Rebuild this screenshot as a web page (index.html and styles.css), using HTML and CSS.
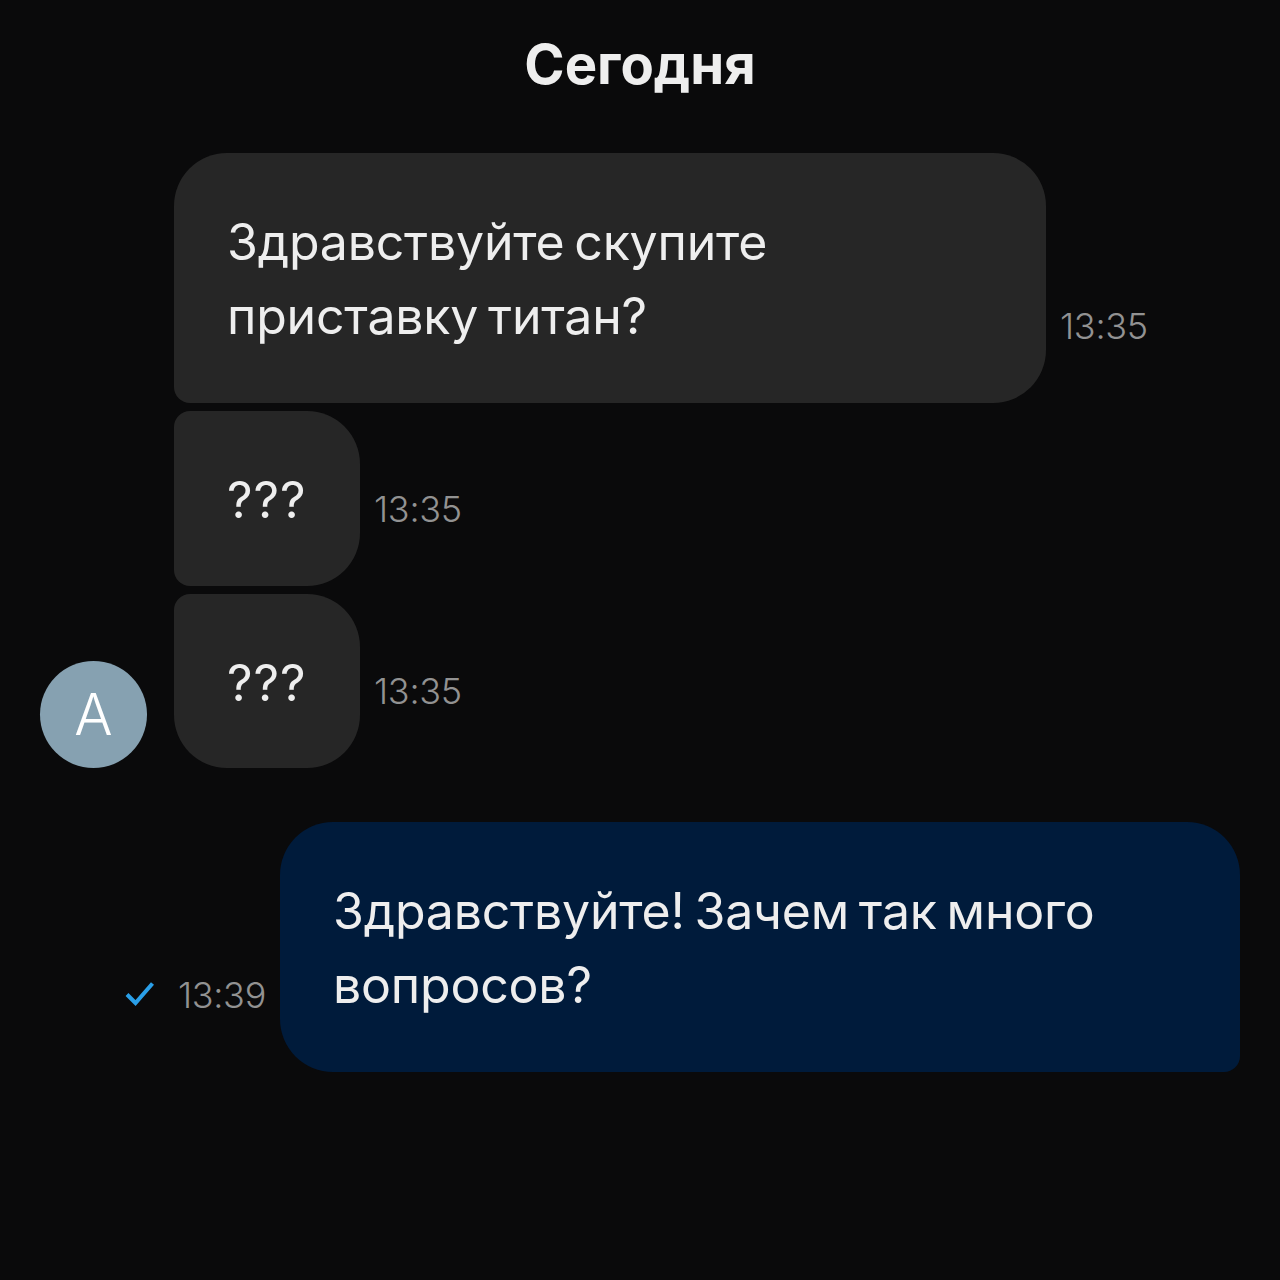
FILE: index.html
```html
<!DOCTYPE html>
<html lang="ru">
<head>
<meta charset="UTF-8">
<meta name="viewport" content="width=device-width, initial-scale=1.0">
<title>Чат</title>
<link rel="stylesheet" href="styles.css">
</head>
<body>

<main class="chat">
  <h1 class="day">Сегодня</h1>

  <section class="incoming">
    <div class="avatar">A</div>
    <div class="stack">
      <div class="row">
        <div class="bubble bubble-wide in first">Здравствуйте скупите<br>приставку титан?</div>
        <span class="time">13:35</span>
      </div>
      <div class="row">
        <div class="bubble short in middle">???</div>
        <span class="time">13:35</span>
      </div>
      <div class="row">
        <div class="bubble short in last">???</div>
        <span class="time">13:35</span>
      </div>
    </div>
  </section>

  <section class="outgoing">
    <svg class="check" width="32" height="28" viewBox="0 0 32 28">
      <path d="M3 15.5 L11.5 24 L28.5 4.5" fill="none" stroke="#2a9fe8" stroke-width="4"/>
    </svg>
    <span class="time time-own">13:39</span>
    <div class="bubble bubble-own">Здравствуйте! Зачем так много<br>вопросов?</div>
  </section>
</main>

</body>
</html>
```

FILE: styles.css
```css
body {
  margin: 0;
  background-color: #0a0a0b;
  font-family: Inter, "Noto Sans", sans-serif;
  color: #eeeeee;
}
.chat {
  width: 1280px;
  height: 1280px;
  padding: 33px 40px 0;
  box-sizing: border-box;
}
.day {
  margin: 0 0 57px;
  font-size: 54.5px;
  line-height: 63px;
  font-weight: 700;
  text-align: center;
}
.incoming {
  display: flex;
  align-items: flex-end;
  gap: 27px;
}
.avatar {
  width: 107px;
  height: 107px;
  border-radius: 50%;
  background-color: #86a1b1;
  color: #fff;
  font-size: 57px;
  font-weight: 300;
  line-height: 107px;
  text-align: center;
}
.stack {
  display: flex;
  flex-direction: column;
  gap: 8px;
}
.row {
  display: flex;
  align-items: flex-end;
  gap: 14px;
}
.bubble {
  padding: 52px 53px 50px;
  font-size: 50px;
  line-height: 74px;
  letter-spacing: -0.2px;
  word-spacing: -4px;
  box-sizing: border-box;
}
.short {
  width: 186px;
  padding-bottom: 48.5px;
  letter-spacing: 1px;
}
.in {
  background-color: #262626;
}
.bubble-wide {
  width: 872px;
}
.first {
  border-radius: 53px 53px 53px 16px;
}
.middle {
  border-radius: 16px 53px 53px 16px;
}
.last {
  border-radius: 16px 53px 53px 53px;
}
.time {
  margin-bottom: 54px;
  font-size: 36px;
  font-weight: 350;
  line-height: 46px;
  letter-spacing: -0.3px;
  color: #929292;
}
.outgoing {
  display: flex;
  align-items: flex-end;
  justify-content: flex-end;
  margin-top: 54px;
}
.check {
  margin: 0 22px 65px 0;
}
.time-own {
  margin-right: 14px;
}
.bubble-own {
  width: 960px;
  background-color: #001b3b;
  border-radius: 53px 53px 16px 53px;
}
```
